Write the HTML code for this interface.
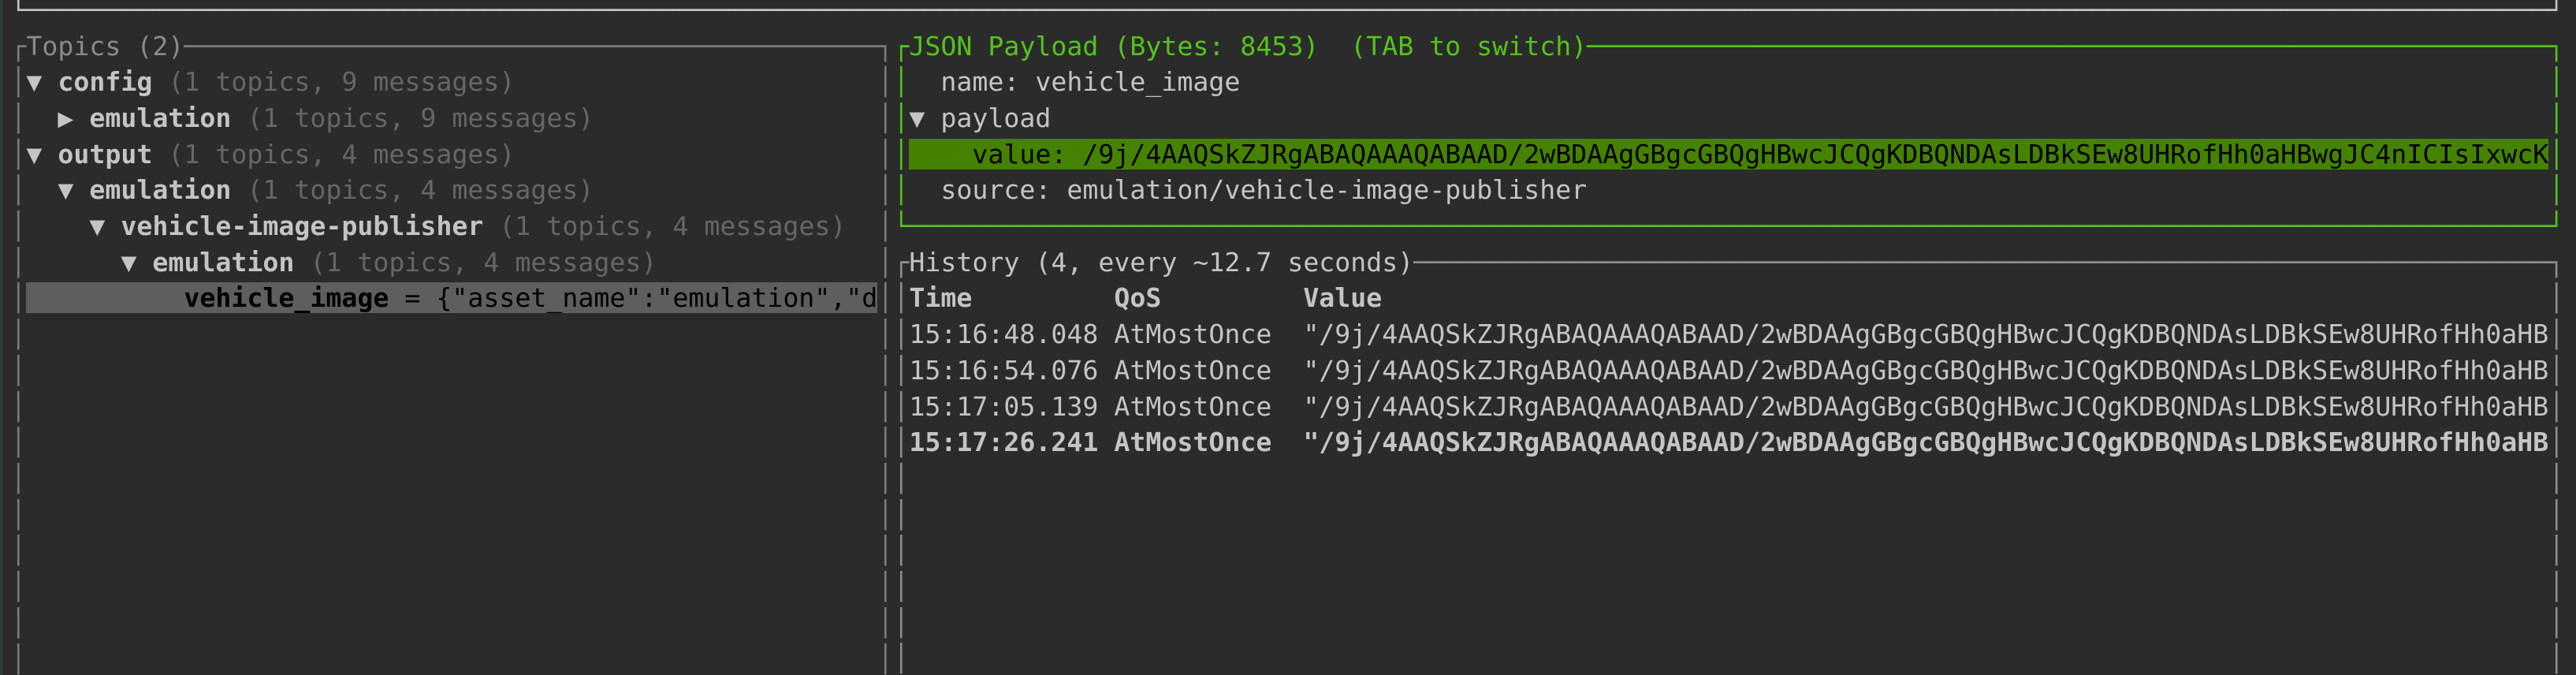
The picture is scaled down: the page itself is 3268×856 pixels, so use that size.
<!DOCTYPE html>
<html><head><meta charset="utf-8"><style>
html,body{margin:0;padding:0;background:#2b2b2b;width:3268px;height:856px;overflow:hidden;position:relative}
.strip{position:absolute;left:0;top:0;width:4px;height:856px;background:#33383b}
.r{position:absolute;font-family:"DejaVu Sans Mono","Liberation Mono",monospace;font-size:33.22px;line-height:45.7px;height:45.7px;white-space:pre;color:#c4c4c4}
.v{position:absolute;font-family:"DejaVu Sans Mono","Liberation Mono",monospace;font-size:33.22px;line-height:45.7px;white-space:pre}
.b{font-weight:bold}
.d{color:#666}
.g{color:#52c41a}
.lb{color:#7c7c7c}
.hb{color:#8e8e8e}
.tb{color:#c4c4c4}
.sel{background:#5e5e5e;color:#000}
.hl{background:#458200;color:#000}
</style></head><body>
<div class="strip"></div>

<!-- row 0 -->
<div class="r tb" style="left:13.33px;top:-10.15px">└────────────────────────────────────────────────────────────────────────────────────────────────────────────────────────────────────────────────────────────────┘</div>

<!-- row 1 -->
<div class="r lb" style="left:13.33px;top:35.55px">┌<span style="color:#8a8a8a">Topics (2)</span>────────────────────────────────────────────┐</div>
<div class="r g" style="left:1133.33px;top:35.55px">┌JSON Payload (Bytes: 8453)  (TAB to switch)─────────────────────────────────────────────────────────────┐</div>

<!-- left verticals -->
<div class="v lb" style="left:13.33px;top:81.25px">│
│
│
│
│
│
│
│
│
│
│
│
│
│
│
│
│</div>
<div class="v lb" style="left:1113.33px;top:81.25px">│
│
│
│
│
│
│
│
│
│
│
│
│
│
│
│
│</div>

<!-- left tree -->
<div class="r" style="left:33.33px;top:81.25px">▼ <span class="b">config</span><span class="d"> (1 topics, 9 messages)</span></div>
<div class="r" style="left:33.33px;top:126.95px">  ▶ <span class="b">emulation</span><span class="d"> (1 topics, 9 messages)</span></div>
<div class="r" style="left:33.33px;top:172.65px">▼ <span class="b">output</span><span class="d"> (1 topics, 4 messages)</span></div>
<div class="r" style="left:33.33px;top:218.35px">  ▼ <span class="b">emulation</span><span class="d"> (1 topics, 4 messages)</span></div>
<div class="r" style="left:33.33px;top:264.05px">    ▼ <span class="b">vehicle-image-publisher</span><span class="d"> (1 topics, 4 messages)</span></div>
<div class="r" style="left:33.33px;top:309.75px">      ▼ <span class="b">emulation</span><span class="d"> (1 topics, 4 messages)</span></div>
<div class="r" style="left:33.33px;top:355.45px"><span class="sel">          <b>vehicle_image</b> = {"asset_name":"emulation","d</span></div>

<!-- JSON box -->
<div class="v g" style="left:1133.33px;top:81.25px">│
│
│
│</div>
<div class="v g" style="left:3233.33px;top:81.25px">│
│
│
│</div>
<div class="r" style="left:1153.33px;top:81.25px">  name: vehicle_image</div>
<div class="r" style="left:1153.33px;top:126.95px">▼ payload</div>
<div class="r" style="left:1153.33px;top:172.65px"><span class="hl">    value: /9j/4AAQSkZJRgABAQAAAQABAAD/2wBDAAgGBgcGBQgHBwcJCQgKDBQNDAsLDBkSEw8UHRofHh0aHBwgJC4nICIsIxwcK</span></div>
<div class="r" style="left:1153.33px;top:218.35px">  source: emulation/vehicle-image-publisher</div>
<div class="r g" style="left:1133.33px;top:264.05px">└────────────────────────────────────────────────────────────────────────────────────────────────────────┘</div>

<!-- History box -->
<div class="r hb" style="left:1133.33px;top:309.75px">┌<span class="tb">History (4, every ~12.7 seconds)</span>────────────────────────────────────────────────────────────────────────┐</div>
<div class="v hb" style="left:1133.33px;top:355.45px">│
│
│
│
│
│
│
│
│
│
│</div>
<div class="v hb" style="left:3233.33px;top:355.45px">│
│
│
│
│
│
│
│
│
│
│</div>
<div class="r b" style="left:1153.33px;top:355.45px">Time         QoS         Value</div>
<div class="r" style="left:1153.33px;top:401.15px">15:16:48.048 AtMostOnce  "/9j/4AAQSkZJRgABAQAAAQABAAD/2wBDAAgGBgcGBQgHBwcJCQgKDBQNDAsLDBkSEw8UHRofHh0aHB</div>
<div class="r" style="left:1153.33px;top:446.85px">15:16:54.076 AtMostOnce  "/9j/4AAQSkZJRgABAQAAAQABAAD/2wBDAAgGBgcGBQgHBwcJCQgKDBQNDAsLDBkSEw8UHRofHh0aHB</div>
<div class="r" style="left:1153.33px;top:492.55px">15:17:05.139 AtMostOnce  "/9j/4AAQSkZJRgABAQAAAQABAAD/2wBDAAgGBgcGBQgHBwcJCQgKDBQNDAsLDBkSEw8UHRofHh0aHB</div>
<div class="r b" style="left:1153.33px;top:538.25px">15:17:26.241 AtMostOnce  "/9j/4AAQSkZJRgABAQAAAQABAAD/2wBDAAgGBgcGBQgHBwcJCQgKDBQNDAsLDBkSEw8UHRofHh0aHB</div>
</body></html>
